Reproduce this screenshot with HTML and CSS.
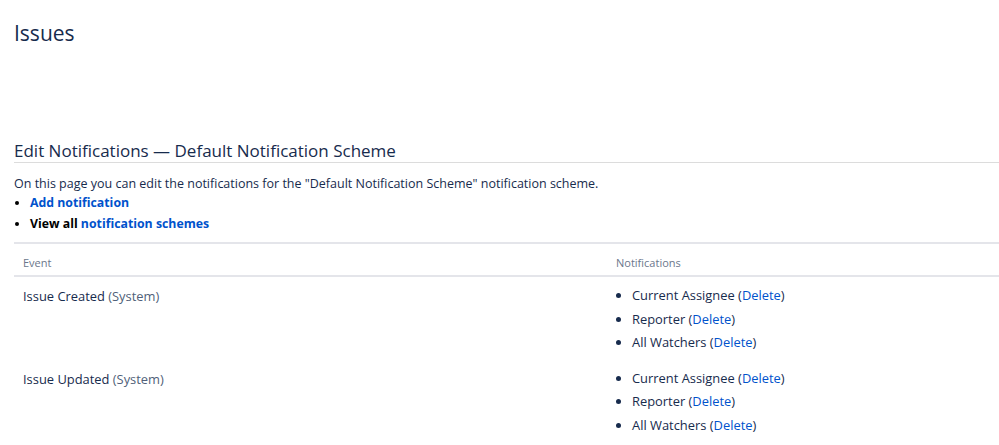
FILE: index.html
```html
<!DOCTYPE html>
<html lang="en">
  <head>
    <meta charset="UTF-8" />
    <title>Edit Notifications</title>
    <link rel="stylesheet" href="styles.css">
  </head>
  <body>
    <h1 class="page-title">Issues</h1>

    <div class="scheme">
      <h2 class="scheme-title">Edit Notifications &mdash; Default Notification Scheme</h2>
      <p class="scheme-desc">On this page you can edit the notifications for the "Default Notification Scheme" notification scheme.</p>
      <ul class="scheme-links">
        <li><a href="#">Add notification</a></li>
        <li>View all <a href="#">notification schemes</a></li>
      </ul>

      <table class="notif-table">
        <thead>
          <tr>
            <th class="col-event">Event</th>
            <th>Notifications</th>
          </tr>
        </thead>
        <tbody>
          <tr>
            <td class="col-event">Issue Created <span class="muted">(System)</span></td>
            <td>
              <ul class="notif-list">
                <li>Current Assignee (<a href="#">Delete</a>)</li>
                <li>Reporter (<a href="#">Delete</a>)</li>
                <li>All Watchers (<a href="#">Delete</a>)</li>
              </ul>
            </td>
          </tr>
          <tr>
            <td class="col-event">Issue Updated <span class="muted">(System)</span></td>
            <td>
              <ul class="notif-list">
                <li>Current Assignee (<a href="#">Delete</a>)</li>
                <li>Reporter (<a href="#">Delete</a>)</li>
                <li>All Watchers (<a href="#">Delete</a>)</li>
              </ul>
            </td>
          </tr>
        </tbody>
      </table>
    </div>
  </body>
</html>
```

FILE: styles.css
```css
body {
  margin: 0;
  padding: 0 0 0 14px;
  font-family: "Open Sans", Arial, sans-serif;
  color: #172b4d;
  background: #fff;
  overflow: hidden;
}
a {
  color: #0052cc;
  text-decoration: none;
}
.page-title {
  margin: 0;
  padding-top: 18px;
  font-size: 21px;
  font-weight: 400;
  line-height: 30px;
}
.scheme {
  margin-top: 92px;
}
.scheme-title {
  margin: 0;
  font-size: 17px;
  font-weight: 400;
  line-height: 22px;
  padding-bottom: 0;
  border-bottom: 1px solid #dcdcdc;
}
.scheme-desc {
  margin: 13px 0 0;
  font-size: 12.5px;
  line-height: 16px;
}
.scheme-links {
  margin: 0;
  padding: 0 0 0 16px;
  font-size: 12.3px;
  font-weight: bold;
  color: #000;
}
.scheme-links li {
  line-height: 21px;
}
.notif-table {
  width: 100%;
  margin-top: 8px;
  border-collapse: collapse;
  border-top: 2px solid #e4e5ea;
  font-size: 12.9px;
}
.notif-table th {
  text-align: left;
  font-weight: 400;
  font-size: 11px;
  color: #6b778c;
  padding: 11px 9px 5px;
  border-bottom: 2px solid #e4e5ea;
}
.notif-table td {
  vertical-align: top;
  padding: 10px 9px 5px;
}
.col-event {
  width: 575px;
}
.muted {
  color: #505f79;
}
.notif-list {
  margin: 0;
  padding: 0 0 0 16px;
}
.notif-list li {
  line-height: 23.5px;
}
.notif-list li:first-child {
  margin-top: -3px;
}
```
